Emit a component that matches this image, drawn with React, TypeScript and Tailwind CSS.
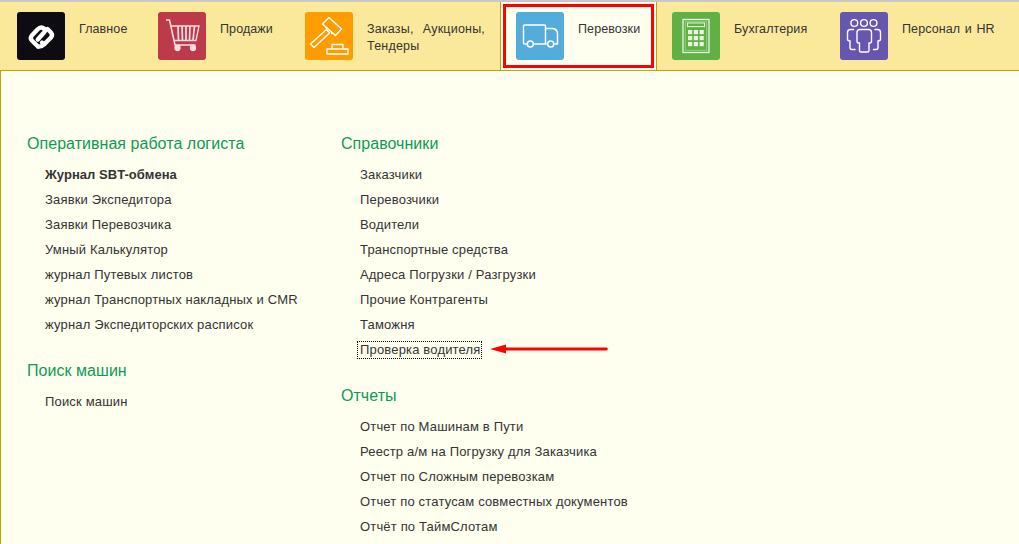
import React from 'react';

const font = "font-['Liberation_Sans',Arial,sans-serif]";

function Logo() {
  return (
    <svg viewBox="0 0 48 48" className="w-full h-full" fill="none" stroke="#fff" strokeWidth="4.4" strokeLinejoin="round" strokeLinecap="round">
      <path d="M21 34.5 L14.8 28.5 Q12.8 26 14.8 23.5 L20.5 17.5 Q24 14 27 16.5 Q28.8 18.5 27 20.5 L20.8 27.5" />
      <path d="M30.5 17 L34 20.5 Q36 23 34 25.5 L27 32.5 Q24.5 35 21 34.5 M27 32.5 L25 30.5" />
    </svg>
  );
}

function Cart() {
  return (
    <svg viewBox="0 0 48 48" className="w-full h-full" fill="none" stroke="#f6dfe0" strokeWidth="1.3">
      <path d="M8 8 H11.5 L17 33 H37.5" strokeWidth="1.6" />
      <path d="M13 14 H41 L38 28.5 H16" />
      <path d="M20 14 L20.5 28.5 M24 14 L24.5 28.5 M28 14 V28.5 M32 14 L31.5 28.5 M36.5 14 L35 28.5" strokeWidth="1.7" />
      <circle cx="19.5" cy="36" r="2.5" fill="#f6dfe0" />
      <circle cx="35" cy="36" r="2.5" fill="#f6dfe0" />
    </svg>
  );
}

function Gavel() {
  return (
    <svg viewBox="0 0 48 48" className="w-full h-full" fill="none" stroke="#fff" strokeWidth="1.4" strokeLinejoin="round">
      <path d="M5.5 32 L21.5 17.5 L24.5 21 L9 35.5 Z" />
      <path d="M17.5 12 L24 5.5 L36.5 17 L30.5 23.5 Z" />
      <path d="M22 16.5 L20.5 15 M26 20.5 L27.5 22" />
      <path d="M22 42 H43 V37 H38 V32.5 H27 V37 H22 Z" />
      <path d="M27 37 H38" />
    </svg>
  );
}

function Truck() {
  return (
    <svg viewBox="0 0 48 48" className="w-full h-full" fill="none" stroke="#fff" strokeWidth="1.5" strokeLinejoin="round">
      <path d="M11 32 H8.5 Q7.5 32 7.5 31 V14 Q7.5 13 8.5 13 H28.5 Q29.5 13 29.5 14 V32 H17.5" />
      <path d="M29.5 16.5 H36.5 Q41.5 17 41.5 22 V32 H38" />
      <path d="M29.5 32 H31.5" />
      <circle cx="14.3" cy="32" r="3" />
      <circle cx="34.7" cy="32" r="3" />
    </svg>
  );
}

function Calc() {
  const cells = [];
  for (let y = 0; y < 3; y++) {
    for (let x = 0; x < 3; x++) {
      cells.push(<rect key={`${x}-${y}`} x={16 + x * 5.8} y={18 + y * 6} width="4.2" height="4.2" fill="#e8f4e0" />);
    }
  }
  return (
    <svg viewBox="0 0 48 48" className="w-full h-full" fill="none" stroke="#e8f4e0" strokeWidth="1.3">
      <rect x="11" y="7.5" width="26" height="33" />
      <rect x="13.2" y="9.8" width="21.6" height="28.4" strokeWidth="0.6" opacity="0.7" />
      <rect x="15.5" y="11" width="17" height="3.6" strokeWidth="1" />
      <g stroke="none">{cells}</g>
    </svg>
  );
}

function People() {
  return (
    <svg viewBox="0 0 48 48" className="w-full h-full" fill="none" stroke="#fff" strokeWidth="1.4" strokeLinecap="round">
      <circle cx="14.3" cy="11" r="3.4" />
      <circle cx="24" cy="11" r="3.4" />
      <circle cx="33.5" cy="11" r="3.4" />
      <path d="M19.5 38.5 V31 H18.5 Q17 31 17 29 V20.5 Q17 17.5 20 17.5 H28.5 Q31.5 17.5 31.5 20.5 V29 Q31.5 31 30 31 H29 V38.5 Q29 40 27.5 40 H21 Q19.5 40 19.5 38.5 Z" />
      <path d="M13.5 17.5 H10.5 Q7.5 17.5 7.5 20.5 V27 Q7.5 29 10 29 V35.5 Q10 37.5 12 37.5 H15" />
      <path d="M35 17.5 H37.5 Q40.5 17.5 40.5 20.5 V27 Q40.5 29 38 29 V35.5 Q38 37.5 36 37.5 H33.5" />
    </svg>
  );
}

function NavItem({ width, color, icon, active, children }: { width: string; color: string; icon: React.ReactNode; active?: boolean; children: React.ReactNode }) {
  return (
    <div className={`${width} shrink-0 flex h-full ${active ? 'bg-[#fffff0] relative' : ''}`}>
      <div className={`${color} w-12 h-12 rounded-[3px] mt-2.5 ml-[15px] shrink-0 overflow-hidden`}>{icon}</div>
      <div className="ml-3.5 mt-[19px] text-[12.5px] leading-[17px] tracking-[0.1px] text-[#333] [word-spacing:1px]">{children}</div>
      {active && <div className="absolute left-[2px] right-[2px] top-[2px] bottom-[2px] border-[3px] border-[#ff0000]" />}
    </div>
  );
}

function Heading({ children, className = '' }: { children: React.ReactNode; className?: string }) {
  return <div className={`h-[25px] text-[16px] leading-[25px] tracking-[0.04px] text-[#0d9a55] ${className}`}>{children}</div>;
}

function Links({ items, bold, indent = 'ml-[19px]' }: { items: string[]; bold?: string; indent?: string }) {
  return (
    <div className={`mt-[6px] ${indent} text-[13px] leading-[25px] tracking-[0.17px] text-[#333]`}>
      {items.map((t) => (
        <div key={t} className={`h-[25px] whitespace-nowrap ${t === bold ? 'font-bold tracking-[0.05px]' : ''}`}>{t}</div>
      ))}
    </div>
  );
}

export default function App() {
  return (
    <div className={`${font} w-[1019px] h-[544px] overflow-hidden bg-[#fffff0] flex flex-col`}>
      <div className="h-[2px] bg-[#c8c8c8] shrink-0" />
      <div className="h-[69px] shrink-0 bg-[#fbe99b] border-b border-[#bfa30a] flex pl-[2px]">
        <NavItem width="w-[141px]" color="bg-[#0d0c12]" icon={<Logo />}>Главное</NavItem>
        <NavItem width="w-[145px]" color="bg-[#bc3a4a]" icon={<Cart />}>Продажи</NavItem>
        <div className="w-[213px] shrink-0 border-r border-[#bfa30a]">
          <div className="flex h-full">
            <div className="bg-[#ff9c00] w-12 h-12 rounded-[3px] mt-2.5 ml-[17px] shrink-0 overflow-hidden"><Gavel /></div>
            <div className="ml-3.5 mt-[19px] text-[12.5px] leading-[17px] tracking-[0.2px] text-[#333] w-[130px] [word-spacing:5.5px]">Заказы, Аукционы, Тендеры</div>
          </div>
        </div>
        <NavItem width="w-[155px]" color="bg-[#54acdc]" icon={<Truck />} active>Перевозки</NavItem>
        <div className="w-px bg-[#bfa30a] shrink-0" />
        <NavItem width="w-[168px]" color="bg-[#5fb146]" icon={<Calc />}>Бухгалтерия</NavItem>
        <NavItem width="w-[190px]" color="bg-[#6656b0]" icon={<People />}>Персонал и HR</NavItem>
      </div>
      <div className="flex-1 border-l border-[#bfa30a] pl-[26px] pt-[60px] flex relative">
        <div className="w-[314px] shrink-0">
          <Heading>Оперативная работа логиста</Heading>
          <Links
            indent="ml-[18px]"
            bold="Журнал SBT-обмена"
            items={['Журнал SBT-обмена', 'Заявки Экспедитора', 'Заявки Перевозчика', 'Умный Калькулятор', 'журнал Путевых листов', 'журнал Транспортных накладных и CMR', 'журнал Экспедиторских расписок']}
          />
          <Heading className="mt-[21px]">Поиск машин</Heading>
          <Links indent="ml-[18px]" items={['Поиск машин']} />
        </div>
        <div>
          <Heading>Справочники</Heading>
          <Links items={['Заказчики', 'Перевозчики', 'Водители', 'Транспортные средства', 'Адреса Погрузки / Разгрузки', 'Прочие Контрагенты', 'Таможня']} />
          <div className="relative ml-[19px] h-[25px] text-[13px] leading-[25px] tracking-[0.17px] text-[#333] whitespace-nowrap">
            Проверка водителя
            <div className="absolute left-[-3px] top-[4px] w-[125px] h-[18px] border border-dotted border-black" />
            <svg className="absolute left-[130px] top-[6px]" width="120" height="12" viewBox="0 0 120 12">
              <path d="M0 6 L16 1.5 V4.6 H117 Q118.5 6 117 7.4 H16 V10.5 Z" fill="#ff0000" />
            </svg>
          </div>
          <Heading className="mt-[21px]">Отчеты</Heading>
          <Links items={['Отчет по Машинам в Пути', 'Реестр а/м на Погрузку для Заказчика', 'Отчет по Сложным перевозкам', 'Отчет по статусам совместных документов', 'Отчёт по ТаймСлотам']} />
        </div>
      </div>
    </div>
  );
}
